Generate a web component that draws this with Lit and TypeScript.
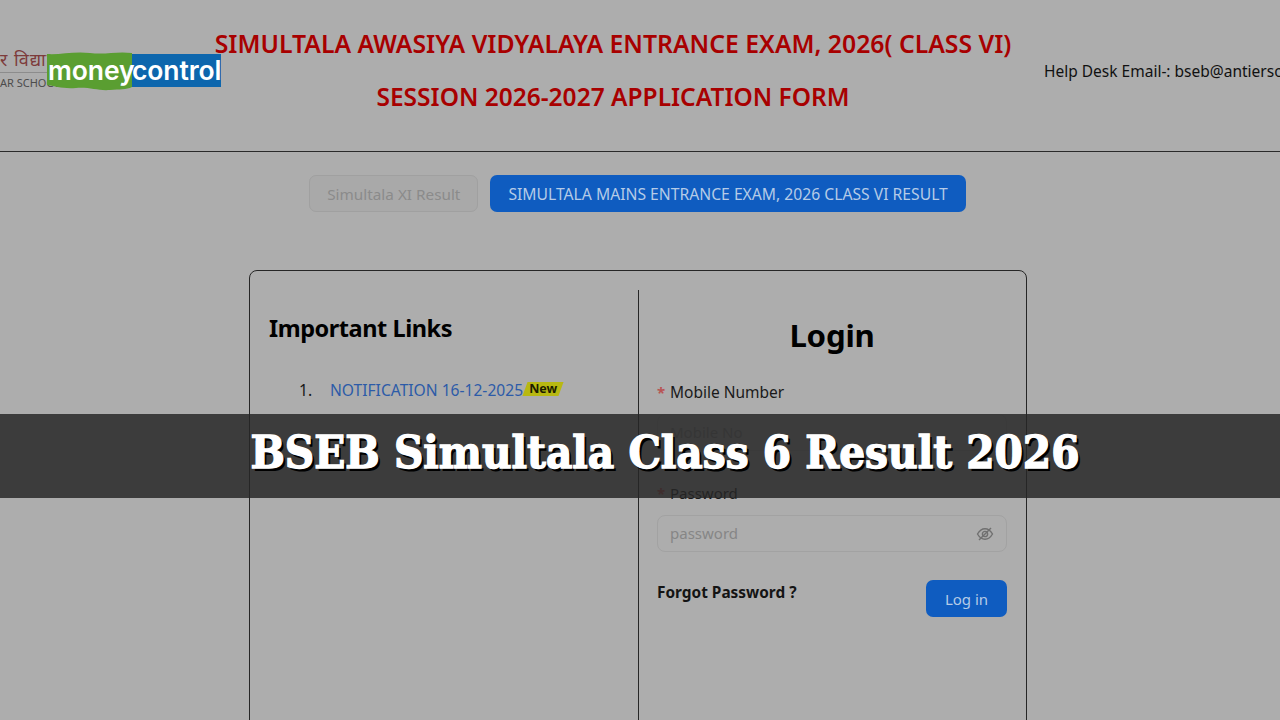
import { LitElement, html, css } from "lit";
import { customElement } from "lit/decorators.js";

@customElement("app-root")
export class AppRoot extends LitElement {
  static styles = css`
    :host { display: block; position: relative; width: 1280px; height: 720px; overflow: hidden; background: #adadad; font-family: "Noto Sans", sans-serif; color: #0d0d0d; }
    .header { height: 151px; border-bottom: 1px solid #2a2a2a; display: grid; grid-template-columns: 226px 774px 1fr; overflow: hidden; }
    .oldlogo { padding-top: 49px; color: #4c4c4c; white-space: nowrap; overflow: hidden; }
    .hindi { color: #7d3b3b; font-size: 18px; letter-spacing: 1px; line-height: 20px; height: 23px; border-bottom: 1px solid #8c8c8c; margin-right: 40px; overflow: hidden; }
    .school { font-size: 11px; margin-top: 2px; line-height: 16px; }
    .titles { display: flex; flex-direction: column; align-items: center; color: #a80000; font-weight: 600; line-height: 53px; padding-top: 17px; white-space: nowrap; }
    .t1 { font-size: 24.75px; }
    .t2 { font-size: 24.5px; }
    .help { font-size: 15.5px; padding-top: 60px; line-height: 22px; white-space: nowrap; padding-left: 44px; color: #111; }
    .tabs { display: flex; justify-content: center; gap: 12px; padding: 23px 5px 0 0; height: 37px; }
    .btn { box-sizing: border-box; height: 37px; border-radius: 7px; line-height: 38px; padding: 0 18px; white-space: nowrap; }
    .btn.off { font-size: 15.3px; background: #a9a9a9; border: 1px solid #a0a0a0; padding: 0 17px; line-height: 36px; color: #8b8b8b; }
    .btn.on { font-size: 15.7px; background: #0f5cc0; color: #b5cbe7; }
    .card { box-sizing: border-box; width: 778px; height: 500px; margin: 58px 0 0 249px; border: 1px solid #262626; border-radius: 8px; padding: 19px 0 0; display: grid; grid-template-columns: 389px 1fr; }
    .left { border-right: 1px solid #262626; padding: 17px 0 0 19px; }
    h2 { margin: 0; font-size: 23.5px; line-height: 42px; font-weight: 700; letter-spacing: -0.45px; color: #000; }
    .item { display: flex; margin-top: 30px; font-size: 15.6px; line-height: 22px; padding-left: 30px; align-items: center; white-space: nowrap; }
    .num { width: 31px; color: #171717; }
    .link { color: #2c5ba8; }
    .new { display: inline-block; background: #b8b812; color: #1c1c00; font-size: 12.5px; font-weight: 700; line-height: 13px; padding: 0 4px 1px; margin-left: 2px; margin-top: -3px; transform: skewX(-20deg); }
    .new span { display: inline-block; transform: skewX(20deg); }
    .right { padding: 23px 19px 0 18px; }
    h1 { margin: 0; text-align: center; font-size: 31.2px; line-height: 44px; font-weight: 700; letter-spacing: -0.2px; color: #000; }
    .label { height: 22px; line-height: 22px; color: #1a1a1a; display: flex; align-items: center; }
    .label i { font-style: normal; color: #b85454; width: 13px; font-size: 15px; font-weight: 700; line-height: 22px; }
    .field { box-sizing: border-box; height: 37px; border: 1px solid #a2a2a2; border-radius: 8px; line-height: 35px; padding: 0 12px; color: #868686; display: flex; justify-content: space-between; align-items: center; }
    .l1 { margin-top: 24px; font-size: 15.5px; }
    .f1 { margin-top: 11px; font-size: 15px; }
    .l2 { margin-top: 31px; font-size: 15px; }
    .f2 { margin-top: 11px; font-size: 15px; }
    .foot { display: flex; justify-content: space-between; margin-top: 28px; }
    .forgot { font-size: 15.4px; font-weight: 700; color: #141414; line-height: 26px; }
    .login { box-sizing: border-box; height: 37px; width: 81px; border-radius: 7px; background: #0f5cc0; color: #b5cbe7; font-size: 15px; line-height: 38px; text-align: center; }
    .logo { position: absolute; left: 46px; top: 52px; width: 176px; height: 40px; }
    .logo svg { position: absolute; inset: 0; }
    .logo div { position: absolute; top: 1px; font-family: "Inter", sans-serif; font-weight: 600; font-size: 26.5px; line-height: 34px; color: #fff; letter-spacing: -0.1px; white-space: nowrap; }
    .money { left: 2px; }
    .control { left: 86px; }
    .banner { position: absolute; left: 0; right: 0; top: 414px; height: 84px; box-sizing: border-box; padding-left: 50px; background: rgba(38,38,38,.84); color: #fff; text-align: center; font-family: "DejaVu Serif Condensed", "DejaVu Serif", serif; font-stretch: condensed; font-weight: 700; font-size: 45.3px; line-height: 77px; -webkit-text-stroke: 1.3px #fff; text-shadow: 2.5px 2.5px 0 #000; white-space: nowrap; }
  `;

  render() {
    return html`
      <div class="header">
        <div class="oldlogo">
          <div class="hindi">र विद्यालय</div>
          <div class="school">AR SCHOOL</div>
        </div>
        <div class="titles">
          <div class="t1">SIMULTALA AWASIYA VIDYALAYA ENTRANCE EXAM, 2026( CLASS VI)</div>
          <div class="t2">SESSION 2026-2027 APPLICATION FORM</div>
        </div>
        <div class="help">Help Desk Email-: bseb@antiersolutions.com</div>
      </div>
      <div class="tabs">
        <div class="btn off">Simultala XI Result</div>
        <div class="btn on">SIMULTALA MAINS ENTRANCE EXAM, 2026 CLASS VI RESULT</div>
      </div>
      <div class="card">
        <div class="left">
          <h2>Important Links</h2>
          <div class="item"><span class="num">1.</span><span class="link">NOTIFICATION 16-12-2025</span><span class="new"><span>New</span></span></div>
        </div>
        <div class="right">
          <h1>Login</h1>
          <div class="label l1"><i>*</i>Mobile Number</div>
          <div class="field f1">Mobile No</div>
          <div class="label l2"><i>*</i>Password</div>
          <div class="field f2">password
            <svg width="18" height="18" viewBox="0 0 24 24" fill="none" stroke="#707070" stroke-width="1.9"><path d="M2 12s4-7 10-7 10 7 10 7-4 7-10 7-10-7-10-7z"/><circle cx="12" cy="12" r="3.5"/><path d="M4 20 20 4"/></svg>
          </div>
          <div class="foot">
            <div class="forgot">Forgot Password ?</div>
            <div class="login">Log in</div>
          </div>
        </div>
      </div>
      <div class="logo">
        <svg width="176" height="40" viewBox="0 0 176 40"><path d="M86 1 C70 -1 60 3 44 1 C28 -1 14 3 1 2 L1 33 C10 34 16 37 30 36 C44 35 52 39 64 38 C74 37 80 38 86 35 Z" fill="#5a9e31"/><rect x="86" y="2" width="89" height="33" fill="#0d66ad"/></svg>
        <div class="money">money</div>
        <div class="control">control</div>
      </div>
      <div class="banner">BSEB Simultala Class 6 Result 2026</div>
    `;
  }
}
